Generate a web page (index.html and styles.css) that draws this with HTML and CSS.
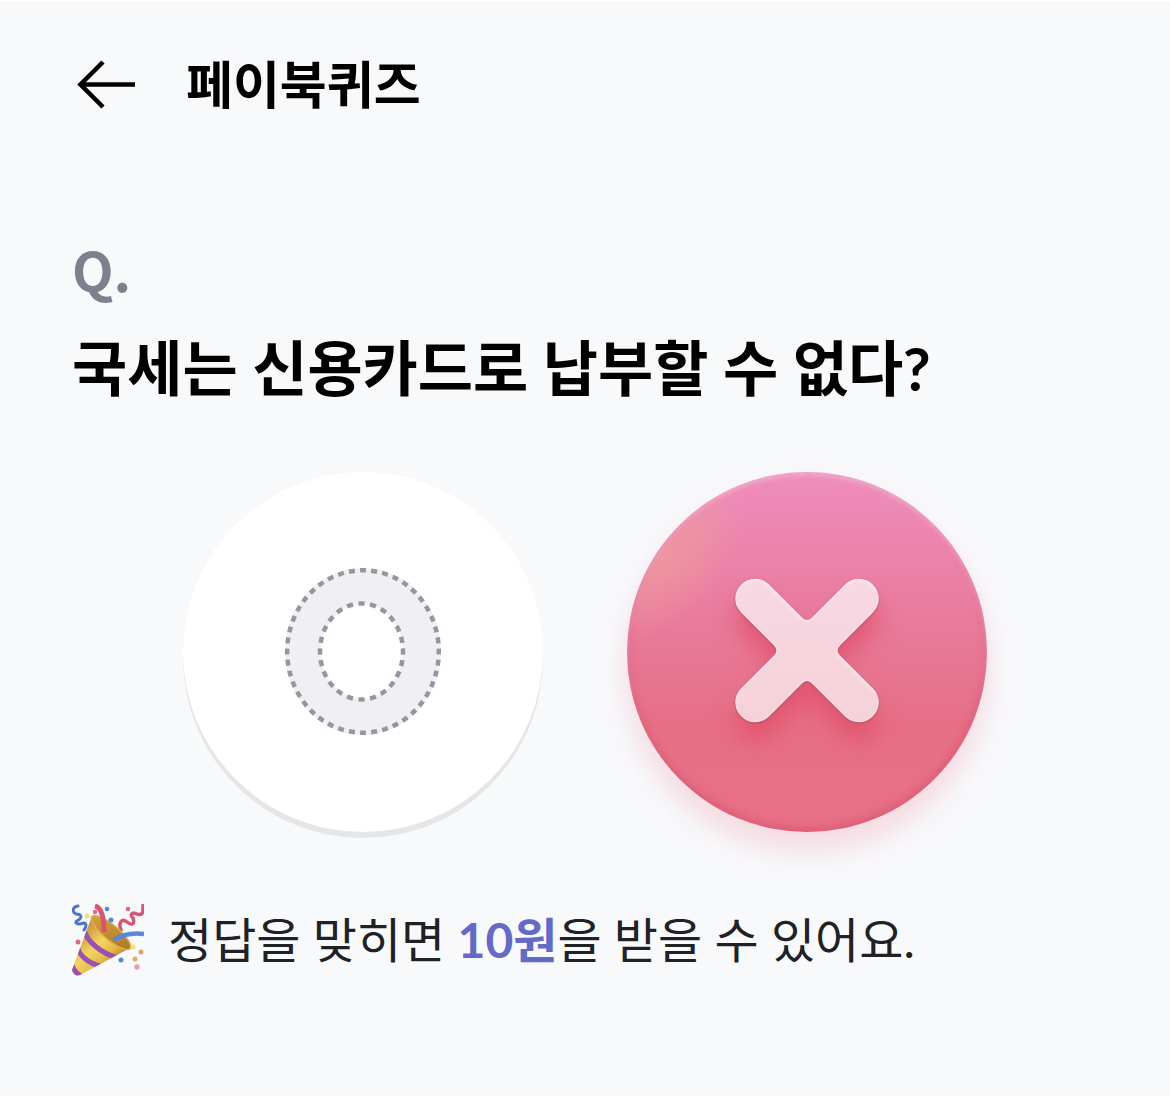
FILE: index.html
```html
<!DOCTYPE html>
<html lang="ko">
  <head>
    <meta charset="UTF-8" />
    <meta name="viewport" content="width=device-width, initial-scale=1.0" />
    <title>페이북퀴즈</title>
    <link rel="stylesheet" href="styles.css">
  </head>
  <body>
    <div class="quiz-page">
      <header class="quiz-header">
        <button type="button" class="back-button" aria-label="뒤로">
          <svg width="63" height="50" viewBox="0 0 63 50" fill="none" stroke="#000" stroke-width="4.500">
            <path d="M8 24.500H63" />
            <path d="M31 2 8.500 24.500 31 47" />
          </svg>
        </button>
        <h1>페이북퀴즈</h1>
      </header>

      <main class="quiz-body">
        <p class="question-mark">Q.</p>
        <h2>국세는 신용카드로 납부할 수 없다?</h2>

        <div class="answers">
          <button type="button" class="answer answer-o" aria-label="O">
            <svg viewBox="0 0 360 360">
              <path fill="#f0f0f3" fill-rule="evenodd" d="M102 179.500a78 83.500 0 1 1 156 0a78 83.500 0 1 1-156 0ZM138 179.500a41 47 0 1 0 82 0a41 47 0 1 0-82 0Z" />
              <g fill="none" stroke="#95969f" stroke-width="4.500">
                <ellipse cx="180" cy="179.500" rx="75.800" ry="81.200" pathLength="44" stroke-dasharray="0.53 0.47" stroke-dashoffset="0.265" />
                <ellipse cx="178.500" cy="179.500" rx="41.500" ry="48" pathLength="24" stroke-dasharray="0.53 0.47" stroke-dashoffset="0.265" />
              </g>
            </svg>
          </button>

          <button type="button" class="answer answer-x" aria-label="X">
            <svg viewBox="0 0 360 360">
              <defs>
                <radialGradient id="glow">
                  <stop offset="0" stop-color="#f0a098" stop-opacity="0.65" />
                  <stop offset="0.5" stop-color="#f0a098" stop-opacity="0.35" />
                  <stop offset="1" stop-color="#f0a098" stop-opacity="0" />
                </radialGradient>
                <linearGradient id="crossFill" x1="0" y1="0" x2="0" y2="1">
                  <stop offset="0" stop-color="#f8d8e4" />
                  <stop offset="1" stop-color="#f4d2d9" />
                </linearGradient>
                <filter id="crossShadow" x="-30%" y="-30%" width="160%" height="180%">
                  <feGaussianBlur stdDeviation="12" />
                </filter>
                <filter id="edgeBlur">
                  <feGaussianBlur stdDeviation="1" />
                </filter>
                <clipPath id="faceClip">
                  <circle cx="180" cy="180" r="178" />
                </clipPath>
                <clipPath id="crossClip">
                  <use href="#cross" />
                </clipPath>
                <path id="cross" d="M-38-66-5-33Q0-28 5-33L38-66A19.800 19.800 0 0 1 66-38L33-5Q28 0 33 5L66 38A19.800 19.800 0 0 1 38 66L5 33Q0 28-5 33L-38 66A19.800 19.800 0 0 1-66 38L-33 5Q-28 0-33-5L-66-38A19.800 19.800 0 0 1-38-66Z" />
              </defs>
              <g clip-path="url(#faceClip)">
                <ellipse cx="38" cy="86" rx="100" ry="58" transform="rotate(-50 38 86)" fill="url(#glow)" />
              </g>
              <g transform="translate(180 178.500)">
                <use href="#cross" y="20" fill="#e04862" opacity="0.65" filter="url(#crossShadow)" />
                <use href="#cross" y="1" fill="#a94960" opacity="0.8" filter="url(#edgeBlur)" />
                <use href="#cross" fill="url(#crossFill)" />
                <g clip-path="url(#crossClip)">
                  <use href="#cross" y="1" fill="none" stroke="#fff" stroke-width="2" opacity="0.55" filter="url(#edgeBlur)" />
                </g>
              </g>
            </svg>
          </button>
        </div>

        <div class="reward">
          <svg class="party-icon" viewBox="0 0 72 72" aria-hidden="true">
            <defs>
              <linearGradient id="cone" x1="8" y1="28" x2="40" y2="62" gradientUnits="userSpaceOnUse">
                <stop offset="0" stop-color="#c69335" />
                <stop offset="0.45" stop-color="#f5d460" />
                <stop offset="0.75" stop-color="#e5bb47" />
                <stop offset="1" stop-color="#bc862d" />
              </linearGradient>
              <linearGradient id="coneInside" x1="24" y1="14" x2="56" y2="44" gradientUnits="userSpaceOnUse">
                <stop offset="0" stop-color="#d7a33e" />
                <stop offset="1" stop-color="#a97425" />
              </linearGradient>
              <clipPath id="coneClip">
                <path d="M20 12C24 28 39 42 58 44L8 71Q1 73 0 66Z" />
              </clipPath>
            </defs>
            <path fill="none" stroke="#4b75ca" stroke-width="3" stroke-linecap="round" d="M6 2C0 3 0 8 4 10Q9 10 9 13C8 17 3 16 4 19Q6 21 12 19Q16 20 12 26" />
            <path fill="none" stroke="#d95577" stroke-width="3.500" stroke-linecap="round" d="M49 26C46 18 50 14 55 18S63 20 61 14Q57 10 62 9Q71 13 71 6V1" />
            <path fill="url(#cone)" d="M20 12C24 28 39 42 58 44L8 71Q1 73 0 66Z" />
            <g clip-path="url(#coneClip)" fill="none" stroke="#9a50b6" stroke-width="5">
              <path d="M12 26C15 37 28 49 46 54" />
              <path d="M6 44C7 51 16 59 28 62" />
              <path d="M0 61Q2 68 9 72" />
            </g>
            <ellipse cx="39" cy="28.500" rx="25" ry="7.500" transform="rotate(40 39 28.500)" fill="url(#coneInside)" stroke="#ddb04a" stroke-width="1.500" />
            <path fill="none" stroke="#dc5270" stroke-width="5" d="M23 2Q32 4 32 28" />
            <path fill="none" stroke="#5689db" stroke-width="4.500" d="M42 36Q54 28 72 30" />
            <g fill="#5689d5">
              <circle cx="35" cy="5" r="2.300" />
              <circle cx="39" cy="16" r="2.500" />
              <circle cx="49" cy="56" r="2.500" />
            </g>
            <g fill="#e06682">
              <circle cx="23" cy="8" r="2.200" />
              <circle cx="56" cy="5" r="2.300" />
              <circle cx="6" cy="38" r="2.500" />
            </g>
            <circle cx="15" cy="12" r="2.500" fill="#f5df6c" />
            <circle cx="61" cy="43" r="2.500" fill="#f5df6c" />
            <circle cx="69" cy="48" r="2.500" fill="#dfa06a" />
            <circle cx="63" cy="55" r="2.500" fill="#e3ad65" />
            <circle cx="65" cy="63" r="2.700" fill="#e89bbb" />
          </svg>
          <p>정답을 맞히면 <strong>10원</strong>을 받을 수 있어요.</p>
        </div>
      </main>
    </div>
  </body>
</html>
```

FILE: styles.css
```css
* {
  box-sizing: border-box;
}
body {
  margin: 0;
  background: #fff;
  color: #000;
  font-family: Lato, "Noto Sans CJK KR", sans-serif;
}
h1,
h2,
p {
  margin: 0;
}
button {
  padding: 0;
  border: none;
  background: none;
  cursor: pointer;
}
svg {
  display: block;
}
.quiz-page {
  border-top: 1px solid #fff;
  background: #f8f9fb;
  background-clip: padding-box;
}
.quiz-header {
  display: flex;
  align-items: center;
  gap: 51px;
  height: 168px;
  padding: 0 72px;
}
.quiz-header h1 {
  font-size: 51px;
  font-weight: 700;
  line-height: 72px;
}
.quiz-body {
  padding: 60px 72px 120px;
}
.question-mark {
  margin-bottom: 15px;
  color: #7e818d;
  font-family: "Noto Sans CJK KR", sans-serif;
  font-size: 54px;
  font-weight: 700;
  line-height: 80px;
}
.quiz-body h2 {
  font-size: 60px;
  font-weight: 700;
  line-height: 88px;
}
.answers {
  display: flex;
  justify-content: center;
  gap: 84px;
  margin: 60px 0 72px;
}
.answer {
  width: 360px;
  height: 360px;
  border-radius: 50%;
}
.answer-o {
  background: #fff;
  box-shadow: 0 6px 0 #e5e6e7;
}
.answer-x {
  background: linear-gradient(#ee8dbc, #e8799a 45%, #e66f85 70%, #e87187);
  box-shadow:
    0 18px 30px rgba(232, 90, 120, 0.2),
    inset 0 4px 4px rgba(255, 255, 255, 0.25),
    inset 0 -4px 8px rgba(200, 60, 90, 0.4);
}
.reward {
  display: flex;
  align-items: center;
  gap: 24px;
}
.party-icon {
  flex: none;
  width: 72px;
  height: 72px;
}
.reward p {
  color: #202124;
  font-size: 48px;
  line-height: 72px;
}
.reward strong {
  color: #636ac7;
  font-weight: 700;
}
```
